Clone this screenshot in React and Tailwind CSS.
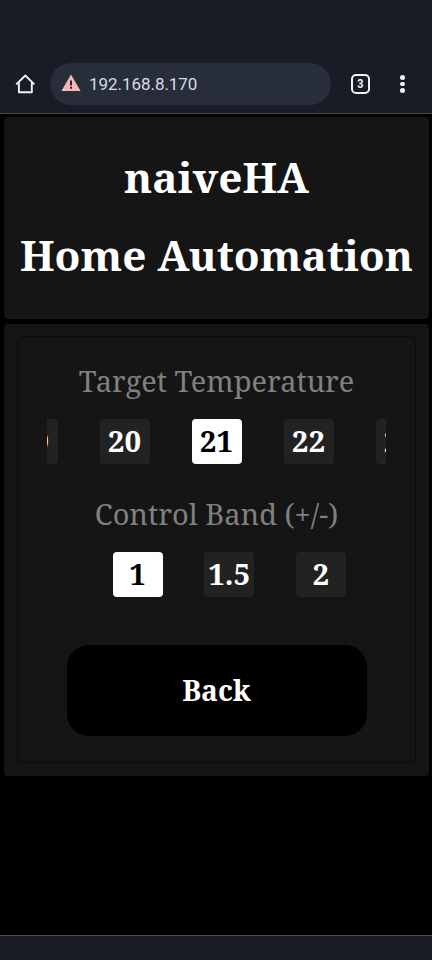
const serif = "font-['Noto_Serif','Droid_Serif','DejaVu_Serif_Condensed','DejaVu_Serif',serif]";

function Option({ label, selected }) {
  return (
    <div
      className={`flex h-[45px] w-[50px] shrink-0 items-center justify-center rounded-[4px] pb-[2px] text-[29.5px] leading-[43px] font-bold ${
        selected ? "bg-white text-black" : "bg-[#222] text-white"
      }`}
    >
      {label}
    </div>
  );
}

function BrowserBar() {
  return (
    <header className="flex h-[114px] items-start border-b border-[#444653] bg-[#191b26] pt-[63px] font-[Roboto,sans-serif]">
      <svg className="mt-[11px] ml-[15px] h-5 w-5" viewBox="0 0 20 20" fill="none" stroke="#f0f1fa" strokeWidth="1.9" strokeLinejoin="round">
        <path d="M1.2 10.4 10.3 1.5l9.1 8.9M3.9 8.4v9.8h12.9V8.4" />
      </svg>
      <div className="ml-[15px] flex h-[42px] w-[281px] items-center rounded-full bg-[#282d3a]">
        <svg className="mb-[2px] ml-[11px] h-[18px] w-[20px]" viewBox="0 0 20 18">
          <path d="M10 .6 19.6 17H.4z" fill="#f4b8b5" />
          <path d="M9 6.6h2v4.8H9zM9 12.8h2v2H9z" fill="#282d3a" />
        </svg>
        <span className="ml-[8px] text-[17px] leading-[42px] tracking-[-0.05px] text-[#d9dbe8]">192.168.8.170</span>
      </div>
      <div className="mt-[11px] ml-[20px] flex h-[20px] w-[19px] items-center justify-center rounded-[5px] border-2 border-[#f0f1fa] text-[12px] leading-none font-bold text-[#f0f1fa]">
        <span className="scale-x-[0.9]">3</span>
      </div>
      <div className="mt-[12px] ml-[30px] flex flex-col gap-[2px]">
        <i className="h-[4.5px] w-[4.5px] rounded-full bg-[#f0f1fa]" />
        <i className="h-[4.5px] w-[4.5px] rounded-full bg-[#f0f1fa]" />
        <i className="h-[4.5px] w-[4.5px] rounded-full bg-[#f0f1fa]" />
      </div>
    </header>
  );
}

export default function App() {
  return (
    <div className="flex h-[960px] w-[432px] flex-col overflow-hidden bg-black">
      <BrowserBar />
      <main className={`flex grow flex-col gap-[5px] pt-[3px] pr-[3px] pl-[4px] whitespace-nowrap ${serif}`}>
        <section className="h-[202px] rounded-[4px] bg-[#151515] pt-[21px] text-center text-[42.3px] leading-[78px] font-bold text-white">
          <h1>naiveHA</h1>
          <h1>Home Automation</h1>
        </section>
        <section className="h-[452px] rounded-[4px] bg-[#151515] px-[13px] pt-[12px]">
          <div className="flex h-[427px] flex-col items-center rounded-[5px] border border-[#0c0c0c] pt-[24px]">
            <div className="h-[40px] text-[29px] leading-[40px] text-[#808080]">Target Temperature</div>
            <div className="mt-[18px] flex w-[339px] justify-center gap-[42px] overflow-hidden">
              <Option label="19" />
              <Option label="20" />
              <Option label="21" selected />
              <Option label="22" />
              <Option label="23" />
            </div>
            <div className="mt-[30px] h-[40px] text-[29px] leading-[40px] text-[#808080]">Control Band (+/-)</div>
            <div className="mt-[18px] ml-[26px] flex w-[234px] gap-[41.7px]">
              <Option label="1" selected />
              <Option label="1.5" />
              <Option label="2" />
            </div>
            <button className="mt-[48px] flex h-[91px] w-[300px] items-center justify-center rounded-[22px] bg-black text-[28.2px] font-bold text-white">
              Back
            </button>
          </div>
        </section>
      </main>
      <footer className="h-[25px] shrink-0 border-t border-[#4a4c5c] bg-[#191b26]" />
    </div>
  );
}
